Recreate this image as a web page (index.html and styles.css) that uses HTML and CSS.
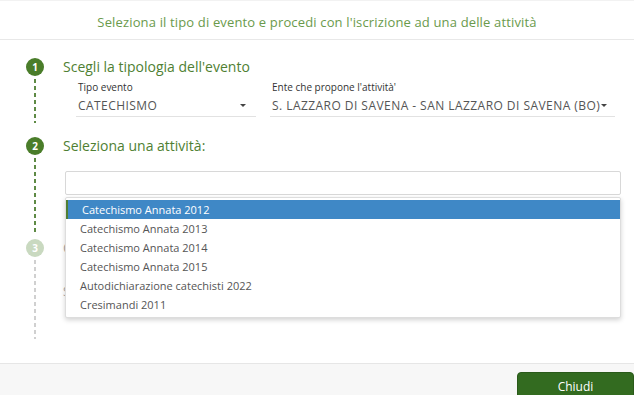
FILE: index.html
```html
<!DOCTYPE html>
<html>
<head>
    <title>Iscrizione attività</title>
    <link rel="stylesheet" href="styles.css">
</head>
<body>

<div class="modal">
    <div class="modal-header">Seleziona il tipo di evento e procedi con l'iscrizione ad una delle attività</div>

    <div class="modal-body">
        <!-- Step 1 -->
        <div class="step step-done step-one">
            <div class="step-marker">
                <span class="step-num">1</span>
                <span class="step-line"></span>
            </div>
            <div class="step-content">
                <h3 class="step-title">Scegli la tipologia dell'evento</h3>
                <div class="fields">
                    <div class="field field-tipo">
                        <label>Tipo evento</label>
                        <div class="select"><span>CATECHISMO</span><span class="caret"></span></div>
                    </div>
                    <div class="field field-ente">
                        <label>Ente che propone l'attività'</label>
                        <div class="select"><span>S. LAZZARO DI SAVENA - SAN LAZZARO DI SAVENA (BO)</span><span class="caret"></span></div>
                    </div>
                </div>
            </div>
        </div>

        <!-- Step 2 -->
        <div class="step step-done step-two">
            <div class="step-marker">
                <span class="step-num">2</span>
                <span class="step-line"></span>
            </div>
            <div class="step-content">
                <h3 class="step-title">Seleziona una attività:</h3>
                <div class="search-wrap">
                    <input class="search-input" type="text">
                    <ul class="dropdown">
                        <li class="selected">Catechismo Annata 2012</li>
                        <li>Catechismo Annata 2013</li>
                        <li>Catechismo Annata 2014</li>
                        <li>Catechismo Annata 2015</li>
                        <li>Autodichiarazione catechisti 2022</li>
                        <li>Cresimandi 2011</li>
                    </ul>
                </div>
            </div>
        </div>

        <!-- Step 3 -->
        <div class="step step-disabled step-three">
            <div class="step-marker">
                <span class="step-num">3</span>
                <span class="step-line"></span>
            </div>
            <div class="step-content">
                <h3 class="step-title">Completa l'iscrizione</h3>
                <p class="step-note">Seleziona prima un'attività</p>
            </div>
        </div>
    </div>

    <div class="modal-footer">
        <button class="close-button" type="button">Chiudi</button>
    </div>
</div>

</body>
</html>
```

FILE: styles.css
```css
body {
    margin: 0;
    font-family: "Open Sans", "Noto Sans", sans-serif;
    color: #444;
    background: #fff;
}

.modal {
    width: 634px;
    height: 395px;
    display: flex;
    flex-direction: column;
    overflow: hidden;
}

.modal-header {
    height: 40px;
    line-height: 42px;
    text-align: center;
    font-size: 13px;
    letter-spacing: 0.15px;
    color: #6a9a4c;
    border-bottom: 1px solid #e8e8e8;
    border-top: 1px solid #f2f2f2;
    box-sizing: border-box;
}

.modal-body {
    flex: 1;
    padding: 18px 13px 0 26px;
}

/* Steps */
.step {
    display: flex;
}

.step-marker {
    width: 18px;
    display: flex;
    flex-direction: column;
    align-items: center;
    margin-right: 19px;
}

.step-num {
    width: 18px;
    height: 18px;
    border-radius: 50%;
    background-color: #4a7d2a;
    color: #fff;
    font-size: 10px;
    font-weight: bold;
    line-height: 18px;
    text-align: center;
}

.step-line {
    flex: 1;
    width: 2px;
    margin-top: 3px;
    background: repeating-linear-gradient(to bottom, #5e8a45 0 4px, transparent 4px 7px);
}

.step-content {
    flex: 1;
}

.step-title {
    margin: 0;
    font-size: 14px;
    font-weight: normal;
    line-height: 18px;
    color: #4f7f33;
}

.step-one {
    height: 79px;
}
.step-one .step-line {
    margin-bottom: 14px;
}

.step-two {
    height: 102px;
}
.step-two .step-line {
    margin-bottom: 7px;
}
.step-two .step-title {
    margin-bottom: 16px;
}

.step-three {
    height: 100px;
}
.step-disabled .step-num {
    background-color: #c9d9c0;
}
.step-disabled .step-line {
    background: repeating-linear-gradient(to bottom, #d0d0d0 0 4px, transparent 4px 7px);
}
.step-disabled .step-title {
    color: #aaa;
}
.step-note {
    margin: 26px 0 0;
    font-size: 12px;
    color: #aaa;
}

/* Step 1 fields */
.fields {
    display: flex;
    gap: 14px;
    margin: 5px 0 0 13px;
}

.field label {
    display: block;
    padding-left: 2px;
    font-size: 10px;
    line-height: 13px;
    color: #333;
}

.field-tipo {
    width: 180px;
}

.field-ente {
    width: 345px;
}

.select {
    height: 22px;
    display: flex;
    align-items: center;
    padding: 0 2px;
    font-size: 12px;
    letter-spacing: 0.45px;
    color: #555;
    border-bottom: 1px solid #e2e2e2;
}

.field-tipo .select {
    justify-content: space-between;
    padding-right: 10px;
}

.field-ente .select .caret {
    margin-left: 1px;
}

.caret {
    width: 0;
    height: 0;
    border-left: 3px solid transparent;
    border-right: 3px solid transparent;
    border-top: 3px solid #444;
}

/* Step 2 search */
.search-wrap {
    position: relative;
    margin-left: 2px;
}

.search-input {
    display: block;
    width: 100%;
    height: 24px;
    box-sizing: border-box;
    border: 1px solid #d8d8d8;
    border-radius: 2px;
    margin: 0;
}

.dropdown {
    position: absolute;
    top: 26px;
    left: 0;
    right: 0;
    margin: 0;
    padding: 2px 0 3px;
    list-style: none;
    background: #fff;
    border: 1px solid #ddd;
    border-radius: 2px;
    box-shadow: 0 2px 5px rgba(0, 0, 0, 0.18);
    z-index: 10;
}

.dropdown li {
    height: 19px;
    line-height: 19px;
    padding-left: 14px;
    font-size: 11px;
    color: #555;
}

.dropdown li.selected {
    background-color: #3f88c6;
    color: #fff;
    border-left: 2px solid #4f7f33;
    padding-left: 14px;
}

/* Footer */
.modal-footer {
    height: 32px;
    box-sizing: border-box;
    border-top: 1px solid #e6e6e6;
    background-color: #f7f7f7;
    display: flex;
    justify-content: flex-end;
    padding-top: 8px;
}

.close-button {
    width: 117px;
    height: 28px;
    background-color: #336b20;
    color: #fff;
    border: 1px solid #2a5a1a;
    border-radius: 4px;
    font-family: "Open Sans", sans-serif;
    font-size: 12px;
    cursor: pointer;
}
```
